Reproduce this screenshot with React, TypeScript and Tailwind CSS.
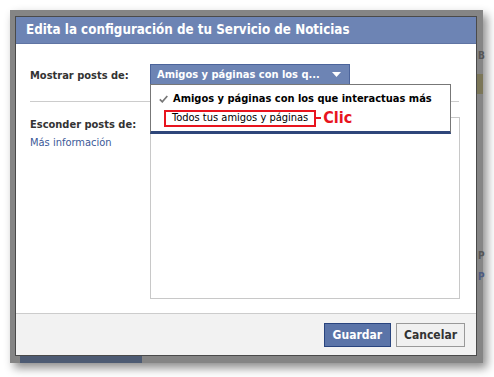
import React from "react";

export default function App() {
  const font = { fontFamily: '"DejaVu Sans Condensed", "DejaVu Sans", Tahoma, sans-serif' } as React.CSSProperties;
  return (
    <div className="w-[494px] h-[377px] bg-white pt-[10px] pl-[10px]" style={font}>
      <div className="relative w-[473px] h-[353px] bg-[#858585] pt-[6px] pl-[5px] shadow-[4px_5px_9px_rgba(0,0,0,0.45)]">
        {/* background page remnants */}
        <div className="absolute left-[10px] top-[346px] w-[122px] h-[7px] bg-[#4d5b73]" />
        <div className="absolute left-[468px] top-[41px] w-[5px] h-[14px] text-[10px] font-bold text-[#555] leading-none">B</div>
        <div className="absolute left-[467px] top-[64px] w-[6px] h-[20px] bg-[#7b7658]" />
        <div className="absolute left-[468px] top-[241px] w-[5px] h-[10px] text-[10px] font-bold text-[#555] leading-none">P</div>
        <div className="absolute left-[468px] top-[262px] w-[5px] h-[10px] text-[10px] font-bold text-[#4d5b80] leading-none">P</div>

        {/* dialog */}
        <div className="relative w-[462px] h-[340px] border border-[#4a4a4a] bg-white flex flex-col">
          <div className="h-[27px] bg-[#6d84b4] border-b border-[#5f74a3] flex items-center pl-[10px] text-white font-bold text-[13.3px]">
            Edita la configuración de tu Servicio de Noticias
          </div>

          <div className="flex-1 relative px-[14px] pt-[20px] text-[11px] leading-[14px] text-[#333]">
            <div className="flex items-center h-[21px]">
              <div className="w-[120px] font-bold text-[#333] pt-[2px]">Mostrar posts de:</div>
              <div className="w-[200px] h-[21px] bg-[#6d84b4] border border-[#4c649b] flex items-center justify-between pl-[6px] pr-[8px] text-white font-bold text-[11px]">
                <span>Amigos y páginas con los q...</span>
                <svg width="9" height="6" viewBox="0 0 9 6"><path d="M0 0 L9 0 L4.5 5 Z" fill="#fff" /></svg>
              </div>
            </div>

            <div className="mt-[16px] h-px bg-[#cccccc] w-[429px]" />

            <div className="flex mt-[15px]">
              <div className="w-[120px] pt-[1px]">
                <div className="font-bold text-[#333]">Esconder posts de:</div>
                <div className="mt-[4px] text-[#3b5998]">Más información</div>
              </div>
              <div className="w-[310px] h-[182px] border border-[#c8c8c8]" />
            </div>

            {/* dropdown menu overlay */}
            <div className="absolute left-[134px] top-[40px] w-[301px] h-[50px] bg-white border border-[#777] border-b-[3px] border-b-[#2e467a] pt-[5px]">
              <div className="flex items-center h-[18px] pl-[8px]">
                <svg width="9" height="8" viewBox="0 0 9 8" className="mr-[5px]">
                  <path d="M0.8 4.3 L3.3 6.8 L8.3 1" stroke="#777" strokeWidth="1.7" fill="none" />
                </svg>
                <span className="font-bold text-[11px] text-black">Amigos y páginas con los que interactuas más</span>
              </div>
              <div className="flex items-center h-[18px] mt-[1px] pl-[13px]">
                <div className="h-[17px] border-2 border-[#e8141e] flex items-center px-[6px] text-[11px] text-black">
                  Todos tus amigos y páginas
                </div>
                <div className="w-[5px] h-[2px] bg-[#e8141e]" />
                <span className="ml-[2px] text-[#e8141e] font-bold text-[16px] leading-none">Clic</span>
              </div>
            </div>
          </div>

          <div className="h-[42px] bg-[#f2f2f2] border-t border-[#cccccc] flex items-center justify-end pr-[11px] gap-[5px]">
            <div className="h-[24px] px-[8px] flex items-center bg-[#5b74a8] border border-[#29447e] text-white font-bold text-[12px]">Guardar</div>
            <div className="h-[24px] px-[7px] flex items-center bg-[#f0f0f0] border border-[#999] text-[#333] font-bold text-[12px]">Cancelar</div>
          </div>
        </div>
      </div>
    </div>
  );
}
